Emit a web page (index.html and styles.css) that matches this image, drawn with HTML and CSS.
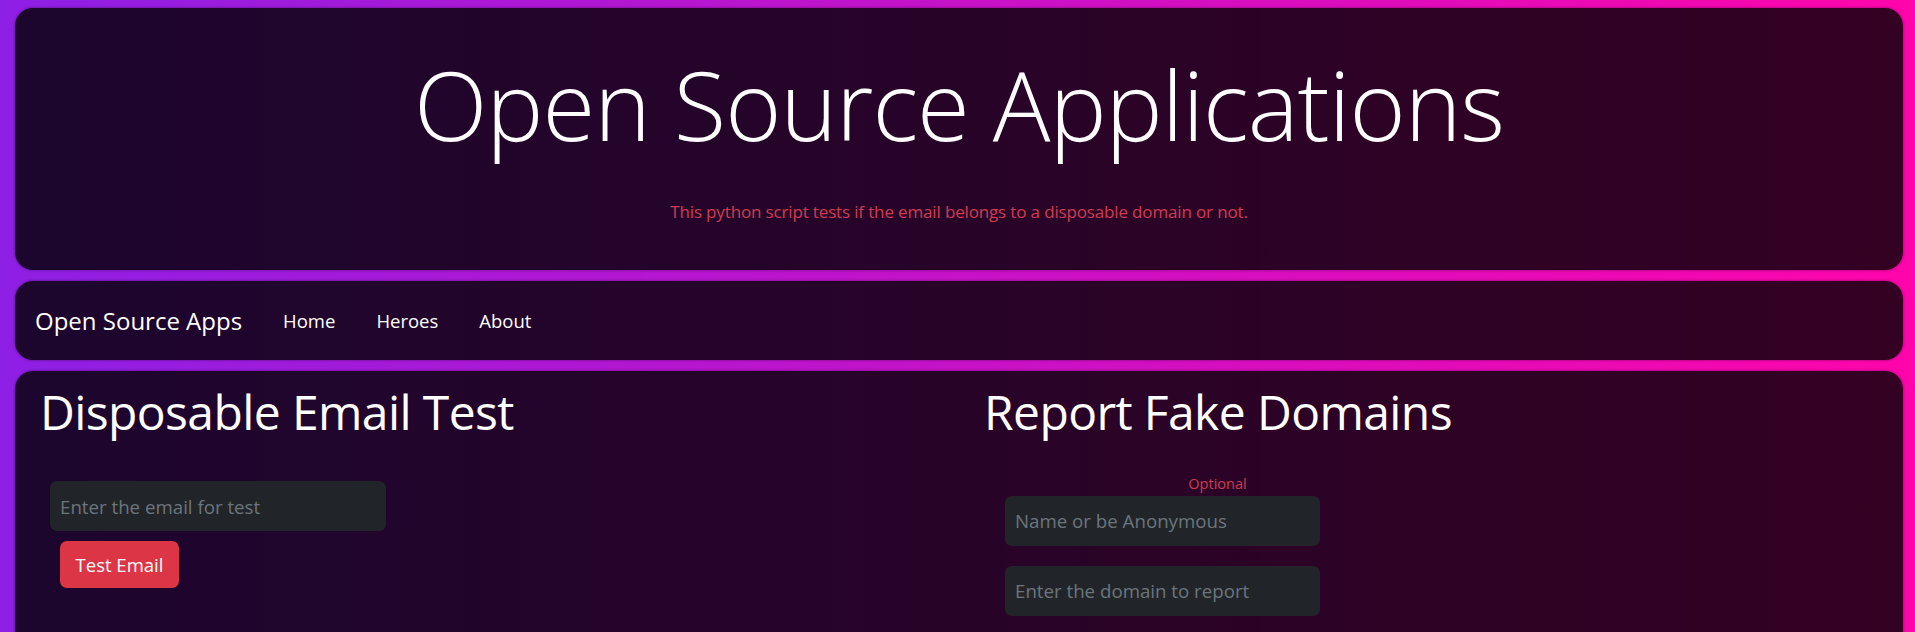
FILE: index.html
```html
<!DOCTYPE html>
<html lang="en">
<head>
<meta charset="utf-8">
<title>Open Source Applications</title>
<link rel="stylesheet" href="styles.css">
</head>
<body>
<div class="page">
  <header class="card hero">
    <h1 class="hero-title">Open Source Applications</h1>
    <p class="hero-sub">This python script tests if the email belongs to a disposable domain or not.</p>
  </header>
  <nav class="card navbar">
    <a class="brand" href="#">Open Source Apps</a>
    <a class="nav-link" href="#">Home</a>
    <a class="nav-link" href="#">Heroes</a>
    <a class="nav-link" href="#">About</a>
  </nav>
  <main class="card content">
    <section class="col col-left">
      <h2 class="section-title">Disposable Email Test</h2>
      <input class="field field-email" type="text" placeholder="Enter the email for test">
      <button class="btn-danger" type="button">Test Email</button>
    </section>
    <section class="col col-right">
      <h2 class="section-title">Report Fake Domains</h2>
      <div class="optional">Optional</div>
      <input class="field field-report" type="text" placeholder="Name or be Anonymous">
      <input class="field field-report field-gap" type="text" placeholder="Enter the domain to report">
    </section>
  </main>
</div>
</body>
</html>
```

FILE: styles.css
```css
html, body {
  margin: 0;
  padding: 0;
}
body {
  min-height: 632px;
  background: linear-gradient(to right, #8e1fe5 0%, #ff05ab 100%);
  font-family: "Open Sans", "Noto Sans", sans-serif;
  color: #fff;
  overflow: hidden;
}
.page {
  display: flex;
  flex-direction: column;
  gap: 11px;
  padding: 8px 12px 0 15px;
}
.card {
  background: rgba(0, 0, 0, 0.8);
  border-radius: 18px;
  box-shadow: 0 0 3px rgba(0, 0, 0, 0.45);
}
.hero {
  height: 262px;
  box-sizing: border-box;
  padding-top: 48px;
  display: flex;
  flex-direction: column;
  align-items: center;
}
.hero-title {
  margin: 0;
  font-size: 96px;
  line-height: 1;
  font-weight: 300;
  letter-spacing: -1px;
  white-space: nowrap;
}
.hero-sub {
  margin: 51px 0 0;
  font-size: 17px;
  line-height: 1;
  font-weight: 400;
  letter-spacing: -0.15px;
  color: #d23b52;
}
.navbar {
  height: 79px;
  display: flex;
  align-items: center;
  padding-left: 20px;
}
.navbar a {
  color: #fff;
  text-decoration: none;
}
.brand {
  font-size: 24px;
  margin-right: 41px;
}
.nav-link {
  font-size: 18.5px;
  margin-right: 41px;
}
.content {
  height: 320px;
  display: grid;
  grid-template-columns: 1fr 1fr;
  align-items: start;
}
.col {
  display: flex;
  flex-direction: column;
  align-items: flex-start;
  padding: 17px 0 0 27px;
}
.section-title {
  margin: 0 0 0 -2px;
  font-size: 48px;
  line-height: 1;
  font-weight: 400;
  letter-spacing: -0.6px;
  white-space: nowrap;
}
.field {
  box-sizing: border-box;
  height: 50px;
  border: 0;
  border-radius: 7px;
  background: #212529;
  color: #dee2e6;
  font-family: inherit;
  font-size: 18.7px;
  padding: 0 10px;
  outline: none;
}
.field::placeholder {
  color: #6c757d;
}
.field-email {
  width: 336px;
  margin: 45px 0 0 8px;
}
.btn-danger {
  box-sizing: border-box;
  width: 119px;
  height: 47px;
  margin: 10px 0 0 18px;
  border: 0;
  border-radius: 7px;
  background: #dc3545;
  color: #fff;
  font-family: inherit;
  font-size: 18.5px;
  padding: 0;
}
.optional {
  width: 463px;
  margin-top: 41px;
  text-align: center;
  font-size: 14.5px;
  line-height: 1;
  color: #cf3a50;
}
.field-report {
  width: 315px;
  margin: 4px 0 0 19px;
}
.field-report.field-gap {
  margin-top: 20px;
}
```
